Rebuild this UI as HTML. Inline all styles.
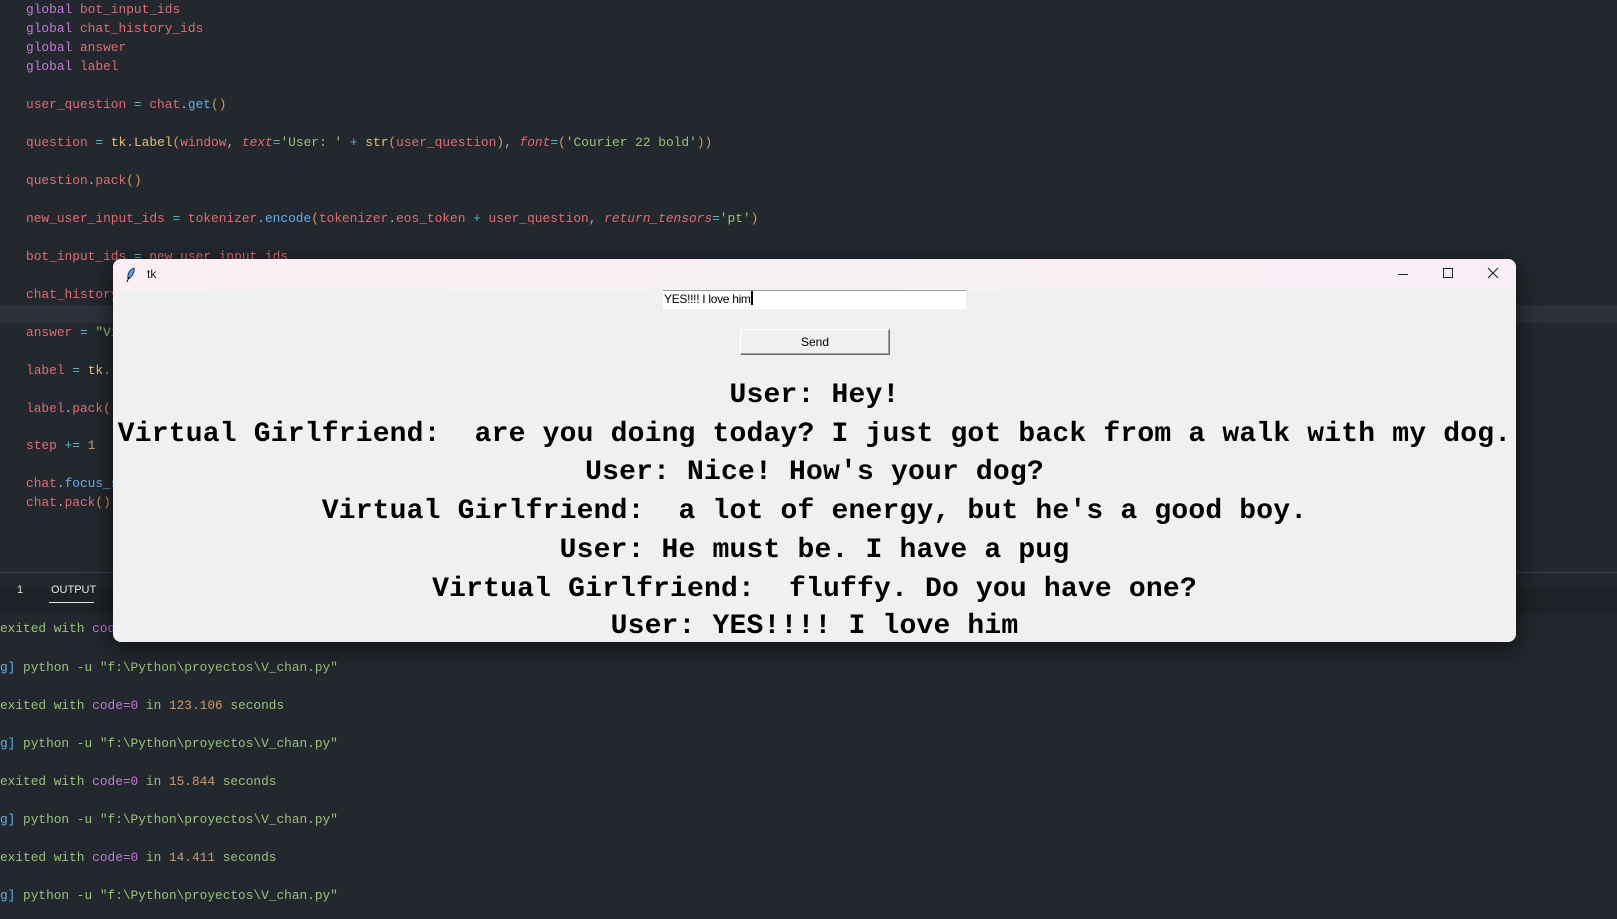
<!DOCTYPE html>
<html><head><meta charset="utf-8"><style>
*{margin:0;padding:0;box-sizing:border-box}
body{width:1617px;height:919px;background:#23272e;overflow:hidden;position:relative;font-family:"Liberation Mono",monospace}
.c{position:absolute;left:26px;font-size:12.85px;line-height:16px;white-space:pre;color:#e06c75}
.k{color:#c678dd}.f{color:#61afef}.s{color:#98c379}.n{color:#d19a66}.o{color:#56b6c2}.y{color:#e5c07b}.w{color:#abb2bf}.i{font-style:italic;color:#e06c75}
.t{position:absolute;left:0;font-size:12.8px;line-height:16px;white-space:pre;color:#98c379}
.win{position:absolute;left:113px;top:259px;width:1403px;height:383px;background:#f0f0f0;border-radius:8px;overflow:hidden;box-shadow:0 6px 24px rgba(0,0,0,.6)}
.tb{height:31px;background:linear-gradient(90deg,#f9eff4,#f7f0f3 50%,#f8eef6)}
.chat{position:absolute;left:0;width:1403px;text-align:center;font-family:"Liberation Mono",monospace;font-weight:bold;font-size:28px;letter-spacing:0.19px;line-height:32px;color:#000;white-space:pre}
</style></head><body>
<div style="position:absolute;left:0;top:305px;width:1617px;height:18px;background:#2c313a"></div>
<div class="c" style="top:2px"><span class="k">global</span> bot_input_ids</div>
<div class="c" style="top:21px"><span class="k">global</span> chat_history_ids</div>
<div class="c" style="top:40px"><span class="k">global</span> answer</div>
<div class="c" style="top:59px"><span class="k">global</span> label</div>
<div class="c" style="top:97px">user_question <span class="o">=</span> chat<span class="w">.</span><span class="f">get</span><span class="n">()</span></div>
<div class="c" style="top:135px">question <span class="o">=</span> <span class="y">tk</span><span class="w">.</span><span class="y">Label</span><span class="n">(</span>window<span class="w">,</span> <span class="i">text</span><span class="o">=</span><span class="s">'User: '</span> <span class="o">+</span> <span class="y">str</span><span class="n">(</span>user_question<span class="n">)</span><span class="w">,</span> <span class="i">font</span><span class="o">=</span><span class="n">(</span><span class="s">'Courier 22 bold'</span><span class="n">))</span></div>
<div class="c" style="top:173px">question<span class="w">.</span>pack<span class="n">()</span></div>
<div class="c" style="top:211px">new_user_input_ids <span class="o">=</span> tokenizer<span class="w">.</span><span class="f">encode</span><span class="n">(</span>tokenizer<span class="w">.</span>eos_token <span class="o">+</span> user_question<span class="w">,</span> <span class="i">return_tensors</span><span class="o">=</span><span class="s">'pt'</span><span class="n">)</span></div>
<div class="c" style="top:249px">bot_input_ids <span class="o">=</span> new_user_input_ids</div>
<div class="c" style="top:287px">chat_history_ids</div>
<div class="c" style="top:325px">answer <span class="o">=</span> <span class="s">"Vi</span></div>
<div class="c" style="top:363px">label <span class="o">=</span> <span class="y">tk</span><span class="w">.</span></div>
<div class="c" style="top:401px">label<span class="w">.</span>pack<span class="n">()</span></div>
<div class="c" style="top:438px">step <span class="o">+=</span> <span class="n">1</span></div>
<div class="c" style="top:476px">chat<span class="w">.</span><span class="f">focus_s</span></div>
<div class="c" style="top:495px">chat<span class="w">.</span>pack<span class="n">()</span></div>
<div style="position:absolute;left:0;top:572px;width:1617px;height:1px;background:#3a3f4a"></div>
<div style="position:absolute;left:0;top:589px;width:1617px;height:24px;background:#1e2127"></div>
<div style="position:absolute;left:17px;top:584px;font-family:'Liberation Sans',sans-serif;font-size:11px;color:#ddd">1</div>
<div style="position:absolute;left:51px;top:584px;font-family:'Liberation Sans',sans-serif;font-size:11px;color:#e7e7e7">OUTPUT</div>
<div style="position:absolute;left:49px;top:602px;width:45px;height:1px;background:#e7e7e7"></div>
<div class="t" style="top:621px">exited with <span class="k">cod</span></div>
<div class="t" style="top:660px"><span class="f">g]</span> python -u "f:\Python\proyectos\V_chan.py"</div>
<div class="t" style="top:698px">exited with <span class="k">code=0</span> in <span class="n">123.106</span> seconds</div>
<div class="t" style="top:736px"><span class="f">g]</span> python -u "f:\Python\proyectos\V_chan.py"</div>
<div class="t" style="top:774px">exited with <span class="k">code=0</span> in <span class="n">15.844</span> seconds</div>
<div class="t" style="top:812px"><span class="f">g]</span> python -u "f:\Python\proyectos\V_chan.py"</div>
<div class="t" style="top:850px">exited with <span class="k">code=0</span> in <span class="n">14.411</span> seconds</div>
<div class="t" style="top:888px"><span class="f">g]</span> python -u "f:\Python\proyectos\V_chan.py"</div>

<div class="win">
 <div class="tb">
  <svg style="position:absolute;left:12px;top:8px" width="12" height="16" viewBox="0 0 12 16"><path d="M9 1 C5 2 2 7 3 12 L5 11 C8 8 10 4 9 1Z" fill="#5b9bef" stroke="#123" stroke-width=".8"/><path d="M4 10 L2 15" stroke="#000" stroke-width="1"/></svg>
  <div style="position:absolute;left:34px;top:8px;font-family:'Liberation Sans',sans-serif;font-size:12px;color:#111">tk</div>
  <div style="position:absolute;left:1285px;top:15px;width:10px;height:1px;background:#222"></div>
  <div style="position:absolute;left:1330px;top:9px;width:10px;height:10px;border:1px solid #222"></div>
  <svg style="position:absolute;left:1374px;top:8px" width="12" height="12"><path d="M1 1L11 11M11 1L1 11" stroke="#222" stroke-width="1.1"/></svg>
 </div>
 <div style="position:absolute;left:550px;top:31px;width:303px;height:19px;background:#fff;border-top:1px solid #999;font-family:'Liberation Sans',sans-serif;font-size:12px;line-height:17px;padding-left:1px;color:#000;letter-spacing:-0.3px">YES!!!! I love him<span style="display:inline-block;width:2px;height:14px;background:#000;vertical-align:-2px"></span></div>
 <div style="position:absolute;left:627px;top:70px;width:150px;height:26px;background:#f0f0f0;border:1px solid #fff;border-right-color:#696969;border-bottom-color:#696969;box-shadow:inset -1px -1px #a0a0a0;font-family:'Liberation Sans',sans-serif;font-size:12px;line-height:24px;text-align:center;color:#000">Send</div>
 <div class="chat" style="top:121px">User: Hey!</div>
 <div class="chat" style="top:160px">Virtual Girlfriend:  are you doing today? I just got back from a walk with my dog.</div>
 <div class="chat" style="top:198px">User: Nice! How's your dog?</div>
 <div class="chat" style="top:237px">Virtual Girlfriend:  a lot of energy, but he's a good boy.</div>
 <div class="chat" style="top:276px">User: He must be. I have a pug</div>
 <div class="chat" style="top:315px">Virtual Girlfriend:  fluffy. Do you have one?</div>
 <div class="chat" style="top:352px">User: YES!!!! I love him</div>
</div>
</body></html>
